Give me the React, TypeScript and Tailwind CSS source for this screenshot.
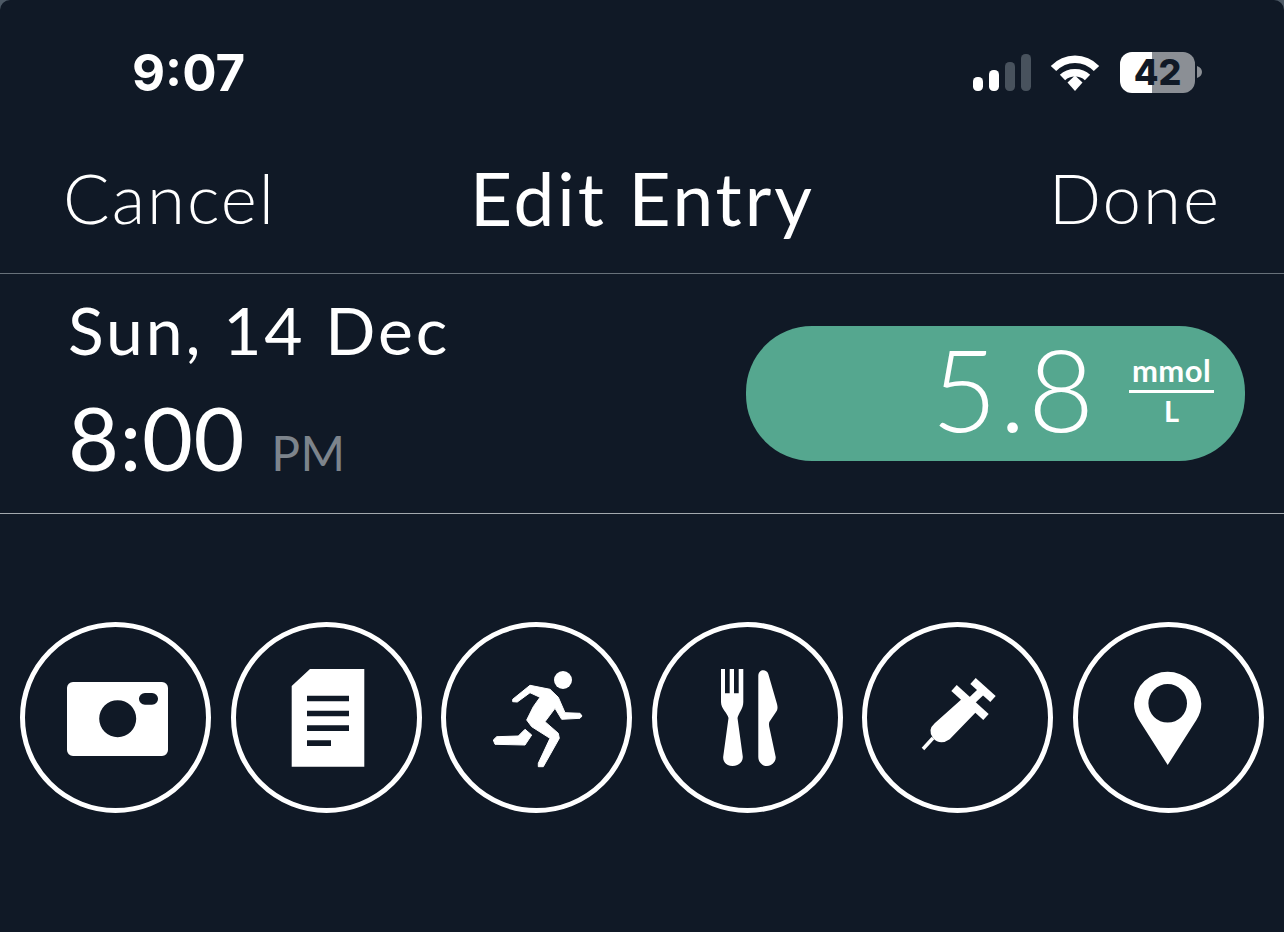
import React from "react";

const W = "#ffffff";

function Circle({ children }: { children: React.ReactNode }) {
  return (
    <div className="w-[191px] h-[191px] rounded-full border-[5px] border-white shrink-0">
      <svg className="block w-[181px] h-[181px]" viewBox="5 5 181 181" fill={W}>
        {children}
      </svg>
    </div>
  );
}

export default function App() {
  return (
    <div className="w-[1284px] h-[932px] bg-[#4d5965]">
      <div className="w-full h-full rounded-t-[10px] bg-[#101926] text-white overflow-hidden flex flex-col font-['Lato',sans-serif]">
        {/* status bar */}
        <div className="h-[146px] shrink-0 flex items-start justify-between pl-[132px] pr-[82px] pt-[44px]">
          <div className="text-[51px] leading-[58px] font-bold font-['Inter',sans-serif]">9:07</div>
          <div className="flex items-start">
            <svg className="block mt-[10px]" width="58" height="37" viewBox="0 0 58 37">
              <rect x="0" y="23" width="10" height="14" rx="4.5" fill={W} />
              <rect x="16" y="16" width="10" height="21" rx="4.5" fill={W} />
              <rect x="32" y="8" width="10" height="29" rx="4.5" fill="#48525d" />
              <rect x="48" y="0" width="10" height="37" rx="4.5" fill="#48525d" />
            </svg>
            <svg className="block ml-[19px] mt-[10px]" width="50" height="37" viewBox="0 0 50 37" fill="none" stroke={W} strokeWidth="7.5">
              <path d="M3.5 14.5C15.5 2 34.500 2 46.500 14.500" />
              <path d="M12.500 23.500C19 17 31 17 37.500 23.500" />
              <path d="M17.500 28.500L25 21.500L32.500 28.500L25 37Z" fill={W} stroke="none" />
            </svg>
            <div className="ml-[20px] mt-[8px] w-[75px] h-[41px] rounded-[12px] bg-[linear-gradient(90deg,#ffffff_0,#ffffff_32px,#8b8f95_32px,#8b8f95_100%)] flex items-center justify-center text-[#101926] text-[36px] leading-[41px] font-extrabold font-['Inter',sans-serif]">
              42
            </div>
            <svg className="block ml-[2px] mt-[22px]" width="5" height="12" viewBox="0 0 5 12">
              <path d="M0 0C3 1 5 3 5 6C5 9 3 11 0 12Z" fill="#8b8f95" />
            </svg>
          </div>
        </div>

        {/* nav */}
        <div className="h-[128px] shrink-0 border-b border-[#68717a] flex items-start justify-between pl-[63px] pr-[63px] pt-[10px]">
          <div className="text-[69px] leading-[84px] font-light tracking-[2px]">Cancel</div>
          <div className="mr-[40px] text-[73px] leading-[84px] font-normal tracking-[2.9px]">Edit Entry</div>
          <div className="text-[69px] leading-[84px] font-light tracking-[2px]">Done</div>
        </div>

        {/* entry row */}
        <div className="h-[240px] shrink-0 border-b border-[#a3a9ae] flex items-start justify-between pl-[68px] pr-[39px]">
          <div className="flex flex-col">
            <div className="text-[66px] leading-[76px] mt-[18px] tracking-[2.9px]">Sun, 14 Dec</div>
            <div className="flex items-baseline mt-[24px]">
              <span className="text-[88px] leading-[90px] tracking-[0.5px]">8:00</span>
              <span className="ml-[26px] text-[48px] leading-[50px] text-[#7d848c] tracking-[0.5px]">PM</span>
            </div>
          </div>
          <div className="mt-[52px] w-[499px] h-[135px] rounded-[66px] bg-[#55a78f] flex items-center justify-end pr-[31px]">
            <span className="text-[114px] leading-[120px] font-light mb-[12px] tracking-[2px]">5.8</span>
            <div className="ml-[33px] w-[85px] flex flex-col items-center mb-[2px]">
              <span className="text-[31px] leading-[34px] font-bold tracking-[0.4px] mt-[-4px] mb-[3px]">mmol</span>
              <span className="w-full h-[3px] bg-white" />
              <span className="text-[29px] leading-[36px] font-bold">L</span>
            </div>
          </div>
        </div>

        {/* action circles */}
        <div className="flex justify-between px-[20px] mt-[108px]">
          <Circle>
            <path fillRule="evenodd" d="M53 60H142A6 6 0 0 1 148 66V128A6 6 0 0 1 142 134H53A6 6 0 0 1 47 128V66A6 6 0 0 1 53 60ZM116.200 96.700A18.500 18.500 0 1 0 79.200 96.700A18.500 18.500 0 1 0 116.200 96.700ZM125 71A6 5.800 0 0 0 125 82.700H132A6 5.800 0 0 0 132 71Z" />
          </Circle>
          <Circle>
            <path fillRule="evenodd" d="M79 47H133.300V144.700H60.700V64ZM76 73.700V79.300H118V73.700ZM76 88.700V94.300H118V88.700ZM76 103.300V109H118V103.300ZM76 118.300V124H100V118.300Z" />
          </Circle>
          <Circle>
            <circle cx="122" cy="58" r="9" />
            <path
              stroke={W}
              strokeWidth="1"
              strokeLinejoin="round"
              d="M71.700 77.300L89 63.300L109 67.300L117.300 75.300L124 90.700L139 91.300L141 94L139 96.300L120.700 97.300L114 86.300L104 99.700L117.300 111.300L118.300 116.300L102.300 144.700L97.300 144.700L97.300 141.300L109 116.300L90.700 104.700L85.700 98L92.300 84.700L99 75.300L89 70.700L76.300 80L71.700 79.700Z"
            />
            <path
              stroke={W}
              strokeWidth="1"
              strokeLinejoin="round"
              d="M84 107.300L90.700 113L84 123L54 122.300L52.300 118L55.700 114.700L77.300 114Z"
            />
          </Circle>
          <Circle>
            <path fillRule="evenodd" d="M69 47H73V71.300H77.700V47H82V71.300H86.700V47H91.300V80C91.300 87 86.500 91 85.500 96L90.700 134C91.500 140 86 144 80.500 144C75 144 70.300 140 71.300 134L76.500 96C75.500 91 69 87 69 80Z" />
            <path d="M106.300 54C106.300 47 114.500 46.500 116.300 52L125 82C126 86 125.500 88 124 90L117.300 100C116.800 102 117 104 117.500 106L123.700 135C124 140 119 144 115 144C110 144 106.300 140 106.300 135Z" />
          </Circle>
          <Circle>
            <path d="M72.700 101.300L104.300 73L116 88L87.700 117.300Q78 124 71 116Q65 108 72.700 101.300Z" />
            <g fill="none" stroke={W}>
              <path d="M92 66L124 95" strokeWidth="8" />
              <path d="M104 84L122 67" strokeWidth="8" />
              <path d="M111 59L131 77" strokeWidth="8" />
              <path d="M71 116L61 127" strokeWidth="3.500" />
            </g>
          </Circle>
          <Circle>
            <path fillRule="evenodd" d="M94.700 143L66 98C62.500 92 61 87 61 81.700A33.700 33.700 0 0 1 128.300 81.700C128.300 87 127 92 123.400 98ZM114 81.300A19.300 19.300 0 1 0 75.400 81.300A19.300 19.300 0 1 0 114 81.300Z" />
          </Circle>
        </div>
      </div>
    </div>
  );
}
